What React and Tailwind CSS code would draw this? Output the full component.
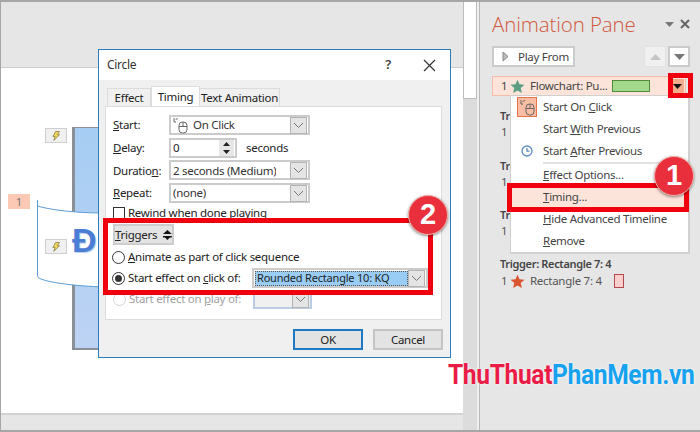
import React from "react";

const Caret = () => (
  <span className="w-[17px] h-[17px] mr-[1px] bg-[#e4e4e4] border border-[#b4b4b4] flex items-center justify-center">
    <svg width="11" height="7" viewBox="0 0 11 7"><path d="M1 1l4.500 4.500L10 1" fill="none" stroke="#777" strokeWidth="1" /></svg>
  </span>
);

const Combo = ({ children, className = "w-[141px]" }) => (
  <div className={`${className} h-[20px] bg-white border-2 border-[#cbcbcb] flex items-center justify-between pl-[2px] text-[#333]`}>
    <span className="truncate flex items-center">{children}</span>
    <Caret />
  </div>
);

const Field = ({ label, children }) => (
  <div className="flex items-center h-[20px]">
    <span className="w-[56px] text-[#222]">{label}</span>
    {children}
  </div>
);

const Radio = ({ on, off }) => (
  <span className={`w-[13px] h-[13px] rounded-full border ${off ? "border-[#d4d4d4]" : "border-[#333]"} bg-white flex items-center justify-center shrink-0`}>
    {on && <span className="w-[7px] h-[7px] rounded-full bg-[#333]" />}
  </span>
);

const Mouse = ({ className = "" }) => (
  <svg width="15" height="17" viewBox="0 0 15 17" className={className} fill="none" stroke="#666" strokeWidth="1">
    <path d="M1 1v4h2M3 3c0-1 1-2 2-1" />
    <rect x="6" y="5" width="8" height="11" rx="3.500" />
    <path d="M6 9.500h8M10 5v4.500" />
  </svg>
);

const Star = ({ color, size = 15 }) => (
  <svg width={size} height={size} viewBox="0 0 24 24"><path d="M12 1l3.200 7.500 8 .7-6.100 5.300 1.900 8L12 18.200 5 22.500l1.900-8L.8 9.200l8-.7z" fill={color} /></svg>
);

const Bolt = () => (
  <span className="w-[22px] h-[15px] bg-[#f0f0f0] border border-[#cfcfcf] flex items-center justify-center">
    <svg width="8" height="10" viewBox="0 0 9 11"><path d="M4 .5h4.500L6 4h2.500L2 10.500 3.500 6H1z" fill="#f1d65a" stroke="#6e6230" strokeWidth=".7" /></svg>
  </span>
);

const MenuRow = ({ icon, children, active }) => (
  <div className={`h-[22.2px] flex items-center text-[#444] ${active ? "bg-[#fde4db]" : ""}`}>
    <span className="w-[32px] flex items-center justify-center">{icon}</span>
    <span>{children}</span>
  </div>
);

const Trigger = () => (
  <div className="h-[49.500px] pl-[8px]">
    <div className="font-semibold text-[#444] h-[17px] leading-[17px] text-[11px] tracking-[-0.3px] pt-[1px]">Tr</div>
    <div className="flex items-center h-[18px] pl-[1px] text-[#555]">1</div>
  </div>
);

const Badge = ({ n, className }) => (
  <div className={`absolute w-[40px] h-[40px] rounded-full bg-[#e92f3b] border border-[#f4b0a8] shadow-[0_1px_3px_rgba(0,0,0,0.45)] flex items-center justify-center text-white font-bold text-[29px] tracking-normal font-['Liberation_Sans',sans-serif] ${className}`}>
    {n}
  </div>
);

export default function App() {
  return (
    <div className="relative w-[700px] h-[432px] overflow-hidden bg-[#e6e6e6] text-[11.5px] tracking-[-0.28px] font-['Noto_Sans',sans-serif] flex flex-col">
      <div className="h-[2px] bg-[#a6a6a6]" />
      <div className="flex-1 flex min-h-0">
        {/* slide area */}
        <div className="w-[463px] border-l border-[#a6a6a6] flex flex-col">
          <div className="h-[66px] bg-[#e6e6e6] border-b border-[#cccccc]" />
          <div className="flex-1 bg-white" />
          <div className="h-[17px] bg-[#e6e6e6] border-t-2 border-[#d2d2d2]" />
        </div>
        {/* scroll bar */}
        <div className="w-[14px] bg-[#dcdcdc]">
          <div className="h-[97px] bg-white border border-[#bdbdbd] border-t-0" />
        </div>
        <div className="w-[2px] bg-[#f0f0f0]" />
        <div className="w-px bg-[#b8b8b8]" />
        {/* animation pane */}
        <div className="flex-1 pl-[12px] pr-[10px] flex flex-col">
          <div className="h-[44px] flex items-center justify-between">
            <span className="text-[20.500px] font-light text-[#d2573b] font-['Open_Sans',sans-serif] tracking-[-0.1px] whitespace-nowrap">Animation Pane</span>
            <span className="flex items-center gap-[6px] pr-0">
              <svg width="9" height="5" viewBox="0 0 9 5"><path d="M0 0h9L4.500 5z" fill="#777" /></svg>
              <svg width="10" height="10" viewBox="0 0 10 10"><path d="M1 1l8 8M9 1l-8 8" stroke="#666" strokeWidth="2" /></svg>
            </span>
          </div>
          <div className="flex items-center h-[21px] mb-[9px]">
            <div className="w-[83px] h-full bg-white border-2 border-[#cbcbcb] flex items-center pl-[8px] text-[#444]">
              <svg width="7" height="11" viewBox="0 0 7 11" className="mr-[9px]"><path d="M1 1l5 4.500L1 10z" fill="#bbb" stroke="#888" /></svg>
              Play From
            </div>
            <div className="ml-auto w-[22px] h-full bg-[#f0f0f0] border border-[#e2e2e2] flex items-center justify-center">
              <svg width="11" height="6" viewBox="0 0 11 6"><path d="M5.500 0L11 6H0z" fill="#c4c4c4" /></svg>
            </div>
            <div className="ml-[2px] w-[22px] h-full bg-white border-2 border-[#cbcbcb] flex items-center justify-center">
              <svg width="11" height="6" viewBox="0 0 11 6"><path d="M0 0h11L5.500 6z" fill="#777" /></svg>
            </div>
          </div>
          <div className="h-[20px] w-[194px] bg-[#fce4da] border border-[#f5bda8] flex items-center pl-[8px] text-[#444]">
            <span className="w-[9px]">1</span>
            <Star color="#5a9f83" />
            <span className="ml-[5px] whitespace-nowrap">Flowchart: Pu...</span>
            <span className="ml-[4px] w-[38px] h-[12px] bg-[#a2d98a] border border-[#4f8a3a]" />
            <span className="ml-auto mr-[1px] w-[14px] h-[14px] bg-[#f4ad8c] flex items-center justify-center">
              <svg width="9" height="5" viewBox="0 0 9 5"><path d="M0 0h9L4.500 5z" fill="#111" /></svg>
            </span>
          </div>
          <div className="mt-[10px]">
            <Trigger />
            <Trigger />
            <Trigger />
            <div className="pl-[8px]">
              <div className="font-semibold text-[#444] h-[17px] leading-[17px] text-[11px] tracking-[-0.35px]">Trigger: Rectangle 7: 4</div>
              <div className="flex items-center h-[19px] pl-[1px] text-[#555]">
                <span className="w-[9px]">1</span>
                <Star color="#d9552f" />
                <span className="ml-[5px]">Rectangle 7: 4</span>
                <span className="ml-[12px] w-[10px] h-[14px] bg-[#fbcfcb] border border-[#b5494f]" />
              </div>
            </div>
          </div>
        </div>
      </div>
      <div className="h-[2px] bg-[#a6a6a6]" />

      {/* slide canvas */}
      <div className="absolute left-[72px] top-[127px] w-[40px] h-[223px] border-l-[3px] border-b-[2px] border-t border-[#8b8f96] bg-gradient-to-b from-[#a6cdf3] to-[#bdd3f4]" />
      <svg className="absolute left-[36px] top-[198px]" width="70" height="92" viewBox="0 0 70 92">
        <path d="M1.500 2v6C15 12 40 15 68 15v74C40 88 15 85 5 81c-3-1-3.500-2-3.500-4z" fill="#fff" stroke="#5b9bd5" strokeWidth="1" />
      </svg>
      <span className="absolute left-[72px] top-[220px] text-[34px] leading-[40px] font-bold text-[#4a7ed4] font-['Liberation_Sans',sans-serif] [text-shadow:1px_1px_0_#bcd0ee]">Đ</span>
      <div className="absolute left-[45px] top-[128px]"><Bolt /></div>
      <div className="absolute left-[45px] top-[239px]"><Bolt /></div>
      <div className="absolute left-[8px] top-[194px] w-[22px] h-[15px] bg-[#fcc9b4] flex items-center justify-center text-[#777]">1</div>

      {/* dialog */}
      <div className="absolute left-[98px] top-[49px] w-[353px] h-[309px] border border-[#2b7cbd] bg-[#f0f0f0] flex flex-col text-[#222]">
        <div className="h-[30px] bg-white flex items-center justify-between pl-[8px] pr-[14px]">
          <span className="text-[12px] text-[#333]">Circle</span>
          <span className="flex items-center gap-[32px]">
            <span className="font-semibold text-[13px] text-[#444]">?</span>
            <svg width="13" height="13" viewBox="0 0 13 13"><path d="M1 1l11 11M12 1L1 12" stroke="#333" strokeWidth="1.200" /></svg>
          </span>
        </div>
        <div className="flex-1 px-[6px] pt-[6px] flex flex-col">
          <div className="flex items-end h-[20px] pl-[2px]">
            <span className="h-[18px] w-[44px] bg-[#f0f0f0] border border-b-0 border-[#dcdcdc] flex items-center justify-center">Effect</span>
            <span className="h-[20px] w-[49px] bg-white border border-b-0 border-[#dcdcdc] flex items-center justify-center">Timing</span>
            <span className="h-[18px] w-[80px] bg-[#f0f0f0] border border-b-0 border-l-0 border-[#dcdcdc] flex items-center justify-center whitespace-nowrap">Text Animation</span>
          </div>
          <div className="h-[214px] w-[337px] bg-white border border-[#dcdcdc] px-[7px] pt-[8px] flex flex-col">
            <div className="flex flex-col gap-[2.700px]">
              <Field label={<><u>S</u>tart:</>}>
                <Combo><Mouse className="mr-[5px]" />On Click</Combo>
              </Field>
              <Field label={<><u>D</u>elay:</>}>
                <div className="w-[68px] h-[20px] border-2 border-[#cbcbcb] flex items-center justify-between pl-[2px]">
                  0
                  <span className="w-[15px] h-[16px] flex flex-col bg-[#e6e6e6] mr-[1px]">
                    <svg width="15" height="8" viewBox="0 0 15 8"><path d="M4 6l3.500-4L11 6z" fill="#222" /></svg>
                    <svg width="15" height="8" viewBox="0 0 15 8"><path d="M4 2l3.500 4L11 2z" fill="#222" /></svg>
                  </span>
                </div>
                <span className="ml-[9px]">seconds</span>
              </Field>
              <Field label={<>Duratio<u>n</u>:</>}><Combo>2 seconds (Medium)</Combo></Field>
              <Field label={<><u>R</u>epeat:</>}><Combo>(none)</Combo></Field>
            </div>
            <div className="flex items-center gap-[3px] h-[13px] mt-[3px] whitespace-nowrap">
              <span className="w-[12px] h-[12px] border border-[#333] bg-white shrink-0" />
              Rewind when done playing
            </div>
            <div className="relative -ml-[10px] mt-[-1px] w-[330px] h-[77px] border-[5px] border-[#f0000f] pl-[5px] pt-[1px] bg-white flex flex-col">
              <div className="w-[61px] h-[21px] bg-[#e3e3e3] border-2 border-[#cdcdcd] flex items-center justify-center gap-[6px]">
                <span><u>T</u>riggers</span>
                <svg width="9" height="10" viewBox="0 0 9 10"><path d="M4.500 0L9 4H0zM0 6h9v1.500H0z M2 7.500h5L4.500 10z" fill="#111" /></svg>
              </div>
              <div className="flex items-center gap-[3px] h-[14px] mt-[5px] -ml-[1px] whitespace-nowrap">
                <Radio /><span><u>A</u>nimate as part of click sequence</span>
              </div>
              <div className="flex items-center gap-[3px] h-[22px] mt-[3px] -ml-[1px] whitespace-nowrap">
                <Radio on /><span className="w-[121px]">Start effect on <u>c</u>lick of:</span>
                <div className="w-[176px] h-[20px] bg-white border-2 border-[#cbcbcb] flex items-center justify-between pl-[1px]">
                  <span className="w-[153px] h-[15px] bg-[#99cdf5] border border-dotted border-[#555] flex items-center pl-[1px] text-[11px] tracking-[-0.2px]">Rounded Rectangle 10: KQ</span>
                  <Caret />
                </div>
              </div>
            </div>
            <div className="flex items-center gap-[3px] h-[20px] mt-[-6px] text-[#a0a0a0] whitespace-nowrap">
              <Radio off /><span className="w-[121px]">Start effect on <u>p</u>lay of:</span>
              <div className="w-[59px] h-[20px] bg-[#f0f0f0] border-2 border-[#b9cce4] flex items-center justify-end">
                <Caret />
              </div>
            </div>
          </div>
          <div className="flex justify-end gap-[10px] pt-[9px] pr-[1px]">
            <button className="w-[70px] h-[21px] bg-[#e3e3e3] border-2 border-[#1f78c4] text-center">OK</button>
            <button className="w-[70px] h-[21px] bg-[#e3e3e3] border-2 border-[#c4c4c4] text-center">Cancel</button>
          </div>
        </div>
      </div>
      <Badge n="2" className="left-[408px] top-[195px]" />

      {/* context menu */}
      <div className="absolute left-[510px] top-[95px] w-[180px] h-[159px] bg-white border border-[#d0d0d0] border-b-2 border-r-2 flex flex-col">
        <MenuRow icon={<span className="w-[20px] h-[20px] bg-[#f8bda3] border border-[#e8734c] flex items-center justify-center"><Mouse /></span>}>Start On <u>C</u>lick</MenuRow>
        <MenuRow>Start <u>W</u>ith Previous</MenuRow>
        <MenuRow icon={<svg width="12" height="12" viewBox="0 0 12 12" fill="none" stroke="#5b8bc0" strokeWidth="1.300"><circle cx="6" cy="6" r="5" /><path d="M6 3v3.200h2.500" /></svg>}>Start <u>A</u>fter Previous</MenuRow>
        <div className="h-[2px] ml-[32px] bg-[#e2e2e2]" />
        <MenuRow><u>E</u>ffect Options...</MenuRow>
        <MenuRow active><u>T</u>iming...</MenuRow>
        <MenuRow><u>H</u>ide Advanced Timeline</MenuRow>
        <MenuRow><u>R</u>emove</MenuRow>
      </div>
      <div className="absolute left-[507px] top-[183px] w-[182px] h-[29px] border-[5px] border-[#f0000f]" />
      <div className="absolute left-[668px] top-[73px] w-[25px] h-[25px] border-[5px] border-[#f0000f]" />
      <Badge n="1" className="left-[654px] top-[156px]" />

      {/* watermark */}
      <div className="absolute left-[448px] top-[358px] origin-left scale-x-[.877] text-[28px] leading-[34px] font-bold tracking-[-0.4px] whitespace-nowrap font-['Roboto',sans-serif] [text-shadow:0_0_3px_#ffffff]">
        <span className="text-[#ea1c45]">ThuThuat</span><span className="text-[#17a2f0]">PhanMem.vn</span>
      </div>
    </div>
  );
}
